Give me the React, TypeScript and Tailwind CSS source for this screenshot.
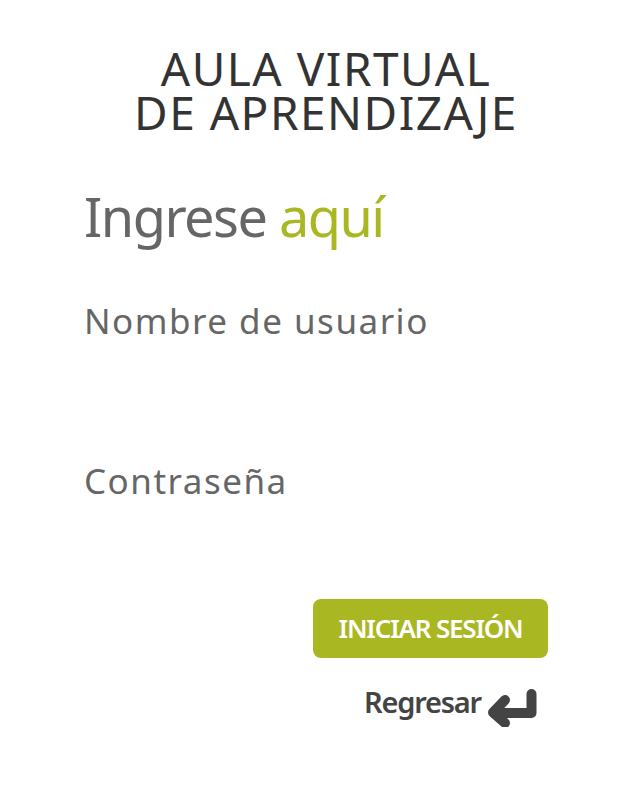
import React from 'react'

const ReturnArrow = () => (
  <svg width="50" height="40" viewBox="0 0 50 40" className="text-[#444] mt-[3px]">
    <path d="M44.5 7 V26 H9" fill="none" stroke="currentColor" strokeWidth="10" strokeLinecap="round" strokeLinejoin="round" />
    <path d="M18 13 L6 25.5 L18 36" fill="none" stroke="currentColor" strokeWidth="10" strokeLinecap="round" strokeLinejoin="round" />
  </svg>
)

const App = () => {
  return (
    <div className="w-[639px] h-[786px] bg-white font-['Noto_Sans',sans-serif]">
      <div className="w-[464px] ml-[84px] pt-[46px] flex flex-col">
        <h1 className="text-center text-[#333] text-[46px] leading-[44px] font-normal tracking-[1.5px] ml-[-3px] w-[490px]">
          AULA VIRTUAL
          <br />
          DE APRENDIZAJE
        </h1>
        <h2 className="mt-[52px] text-[54px] leading-[60px] text-[#666] tracking-[-1.5px]">
          Ingrese <span className="text-[#a9b722]">aquí</span>
        </h2>
        <label className="mt-[53px] text-[35px] leading-[44px] text-[#666] tracking-[1.5px]">Nombre de usuario</label>
        <input type="text" className="h-[70px] outline-none" />
        <label className="mt-[46px] text-[35px] leading-[44px] text-[#666] tracking-[1.5px]">Contraseña</label>
        <input type="password" className="h-[70px] outline-none" />
        <div className="flex justify-end mt-[26px]">
          <button className="bg-[#a9b722] text-white rounded-[8px] w-[235px] h-[59px] text-[26px] font-semibold tracking-[-1.2px]">
            INICIAR SESIÓN
          </button>
        </div>
        <div className="flex justify-end items-start gap-[6px] mt-[26px] pr-[11px]">
          <span className="text-[#444] text-[29px] leading-[36px] font-semibold tracking-[-1.2px]">Regresar</span>
          <ReturnArrow />
        </div>
      </div>
    </div>
  )
}

export default App
